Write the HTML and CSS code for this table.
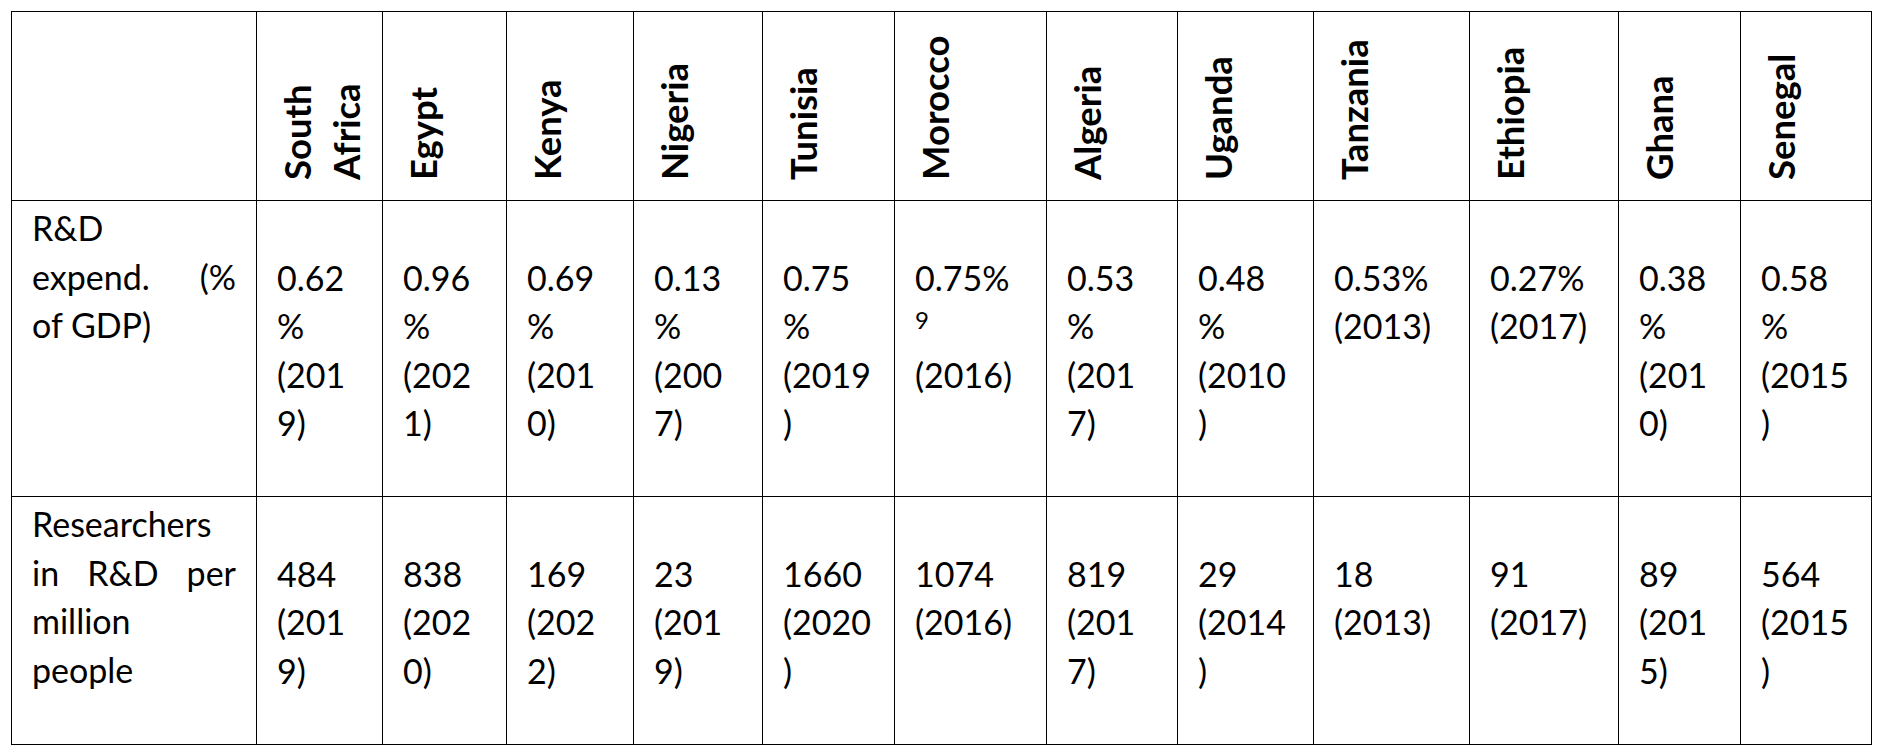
FILE: index.html
```html
<!DOCTYPE html>
<html lang="en">
<head>
    <meta charset="UTF-8">
    <meta name="viewport" content="width=device-width, initial-scale=1.0">
    <title>R&amp;D indicators - African countries</title>
    <link rel="stylesheet" href="styles.css">
</head>
<body>
    <table class="rd-table">
        <colgroup>
            <col style="width: 245px">
            <col style="width: 126px">
            <col style="width: 124px">
            <col style="width: 127px">
            <col style="width: 129px">
            <col style="width: 132px">
            <col style="width: 152px">
            <col style="width: 131px">
            <col style="width: 136px">
            <col style="width: 156px">
            <col style="width: 149px">
            <col style="width: 122px">
            <col style="width: 131px">
        </colgroup>
        <thead>
            <tr>
                <th class="corner"></th>
                <th class="country"><div class="rot">South<br>Africa</div></th>
                <th class="country"><div class="rot">Egypt</div></th>
                <th class="country"><div class="rot">Kenya</div></th>
                <th class="country"><div class="rot">Nigeria</div></th>
                <th class="country"><div class="rot">Tunisia</div></th>
                <th class="country"><div class="rot">Morocco</div></th>
                <th class="country"><div class="rot">Algeria</div></th>
                <th class="country"><div class="rot">Uganda</div></th>
                <th class="country"><div class="rot">Tanzania</div></th>
                <th class="country"><div class="rot">Ethiopia</div></th>
                <th class="country"><div class="rot">Ghana</div></th>
                <th class="country"><div class="rot">Senegal</div></th>
            </tr>
        </thead>
        <tbody>
            <!-- R&D expenditure -->
            <tr>
                <td class="label">
                    <span class="line">R&amp;D</span>
                    <span class="line jl">expend. (%</span>
                    <span class="line">of GDP)</span>
                </td>
                <td class="val">0.62<br>%<br>(201<br>9)</td>
                <td class="val">0.96<br>%<br>(202<br>1)</td>
                <td class="val">0.69<br>%<br>(201<br>0)</td>
                <td class="val">0.13<br>%<br>(200<br>7)</td>
                <td class="val">0.75<br>%<br>(2019<br>)</td>
                <td class="val">0.75%<br><sup>9</sup><br>(2016)</td>
                <td class="val">0.53<br>%<br>(201<br>7)</td>
                <td class="val">0.48<br>%<br>(2010<br>)</td>
                <td class="val">0.53%<br>(2013)</td>
                <td class="val">0.27%<br>(2017)</td>
                <td class="val">0.38<br>%<br>(201<br>0)</td>
                <td class="val">0.58<br>%<br>(2015<br>)</td>
            </tr>
            <!-- Researchers per million -->
            <tr>
                <td class="label">
                    <span class="line">Researchers</span>
                    <span class="line jl">in R&amp;D per</span>
                    <span class="line">million</span>
                    <span class="line">people</span>
                </td>
                <td class="val">484<br>(201<br>9)</td>
                <td class="val">838<br>(202<br>0)</td>
                <td class="val">169<br>(202<br>2)</td>
                <td class="val">23<br>(201<br>9)</td>
                <td class="val">1660<br>(2020<br>)</td>
                <td class="val">1074<br>(2016)</td>
                <td class="val">819<br>(201<br>7)</td>
                <td class="val">29<br>(2014<br>)</td>
                <td class="val">18<br>(2013)</td>
                <td class="val">91<br>(2017)</td>
                <td class="val">89<br>(201<br>5)</td>
                <td class="val">564<br>(2015<br>)</td>
            </tr>
        </tbody>
    </table>
</body>
</html>
```

FILE: styles.css
```css
body {
    margin: 0;
    padding: 11px 0 0 11px;
    background: #fff;
    color: #000;
    font-family: Lato, "Open Sans", "Liberation Sans", sans-serif;
}
.rd-table {
    border-collapse: collapse;
    table-layout: fixed;
    width: 1860px;
    font-size: 34px;
    line-height: 48.5px;
}
.rd-table th,
.rd-table td {
    border: 1px solid #000;
    vertical-align: top;
    text-align: left;
    padding: 3px 20px 0;
}
.rd-table th.country {
    vertical-align: bottom;
    padding: 0 0 20px 16px;
    font-size: 36.5px;
    font-weight: 700;
}
.rot {
    writing-mode: vertical-rl;
    transform: rotate(180deg);
    height: 168px;
    white-space: nowrap;
    text-align: left;
}
.rd-table td.val {
    padding-top: 52.5px;
    padding-bottom: 48.5px;
}
.line {
    display: block;
}
.jl {
    text-align: justify;
    text-align-last: justify;
}
sup {
    font-size: 24px;
    line-height: 0;
    vertical-align: 10px;
}
```
